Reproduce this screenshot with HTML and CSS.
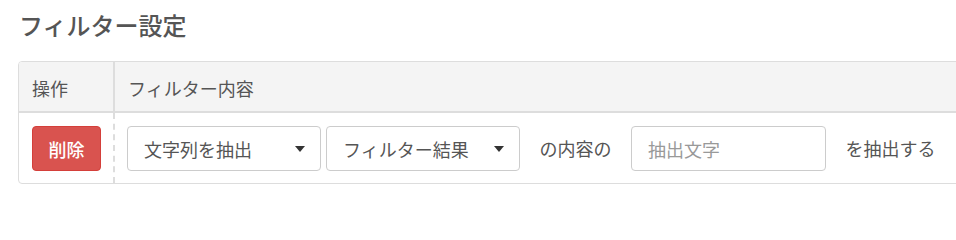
FILE: index.html
```html
<!DOCTYPE html>
<html lang="ja">
<head>
<meta charset="utf-8">
<title>フィルター設定</title>
<link rel="stylesheet" href="styles.css">
</head>
<body>
<h2 class="title">フィルター設定</h2>
<div class="filter-table">
  <div class="row head">
    <div class="cell op">操作</div>
    <div class="cell content">フィルター内容</div>
  </div>
  <div class="row body">
    <div class="cell op">
      <button class="btn-danger" type="button">削除</button>
    </div>
    <div class="cell content">
      <div class="select"><span>文字列を抽出</span><span class="caret"></span></div>
      <div class="select"><span>フィルター結果</span><span class="caret"></span></div>
      <span class="label">の内容の</span>
      <input class="text-input" type="text" placeholder="抽出文字">
      <span class="label">を抽出する</span>
    </div>
  </div>
</div>
</body>
</html>
```

FILE: styles.css
```css
html, body {
  overflow: hidden;
}
body {
  margin: 0;
  padding: 10px 0 0 18px;
  font-family: "Noto Sans CJK JP", "Noto Sans", sans-serif;
  color: #555;
  background: #fff;
}
.title {
  margin: 0 0 0 1px;
  font-size: 24px;
  line-height: 30px;
  font-weight: 500;
  color: #555;
}
.filter-table {
  margin-top: 21px;
  width: 980px;
  border: 1px solid #ddd;
  border-radius: 4px;
  overflow: hidden;
}
.row {
  display: flex;
}
.head {
  background: #f4f4f4;
  height: 49px;
  border-bottom: 2px solid #ddd;
  align-items: center;
  font-size: 18px;
  color: #555;
}
.head .cell {
  height: 49px;
  display: flex;
  align-items: center;
  padding-top: 2px;
  box-sizing: border-box;
}
.cell.op {
  width: 94px;
  padding-left: 13px;
  box-sizing: border-box;
  flex: none;
}
.head .cell.content {
  border-left: 2px solid #ddd;
  padding-left: 13px;
  flex: 1;
}
.body {
  height: 70px;
}
.body .cell {
  display: flex;
  align-items: center;
}
.body .cell.content {
  border-left: 2px dashed #ddd;
  padding-left: 12px;
  flex: 1;
  gap: 5px;
}
.btn-danger {
  width: 69px;
  height: 45px;
  background: #d9534f;
  border: 1px solid #d43f3a;
  border-radius: 4px;
  color: #fff;
  font-family: inherit;
  font-size: 18px;
  font-weight: 500;
  padding: 0;
  margin-top: 1px;
}
.select {
  width: 194px;
  height: 45px;
  box-sizing: border-box;
  border: 1px solid #ccc;
  border-radius: 4px;
  display: flex;
  align-items: center;
  justify-content: space-between;
  padding: 0 15px 0 16px;
  font-size: 18px;
  color: #555;
  background: #fff;
  margin-top: 1px;
}
.caret {
  width: 0;
  height: 0;
  border-left: 5.5px solid transparent;
  border-right: 5.5px solid transparent;
  border-top: 6px solid #333;
}
.label {
  margin: 0 14.5px;
  font-size: 18px;
  color: #555;
}
.text-input {
  width: 195px;
  height: 45px;
  box-sizing: border-box;
  border: 1px solid #ccc;
  border-radius: 4px;
  padding: 0 16px;
  font-family: inherit;
  font-size: 18px;
  color: #555;
  margin-top: 1px;
}
.text-input::placeholder {
  color: #999;
}
```
